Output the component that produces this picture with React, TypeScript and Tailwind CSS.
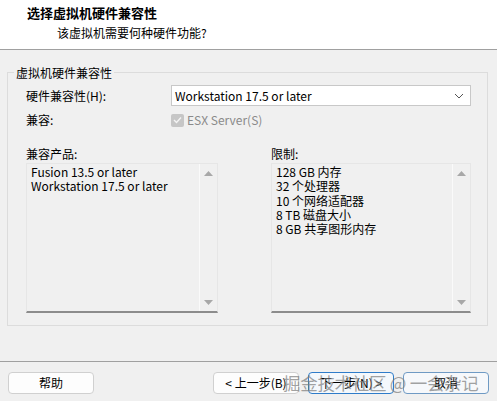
import React from "react";

const FONT = { fontFamily: '"Noto Sans CJK SC", "Noto Sans", sans-serif' };

function UpArrow() {
  return (
    <svg width="9" height="5" viewBox="0 0 9 5">
      <polygon points="0,5 4.5,0 9,5" fill="#a8a8a8" />
    </svg>
  );
}

function DownArrow() {
  return (
    <svg width="9" height="5" viewBox="0 0 9 5">
      <polygon points="0,0 9,0 4.5,5" fill="#a8a8a8" />
    </svg>
  );
}

function ListBox({ width, items }: { width: string; items: string[] }) {
  return (
    <div
      className={`${width} h-[150px] flex bg-[#f0f0f0] border-t border-l border-r border-t-[#e6e6e6] border-l-[#e6e6e6] border-r-[#e6e6e6] border-b-2 border-b-[#8c8c8c]`}
    >
      <div className="flex-1 pl-[4px] pt-[1px] text-[12px] leading-[14.3px] text-black">
        {items.map((t) => (
          <div key={t} className="whitespace-nowrap">
            {t}
          </div>
        ))}
      </div>
      <div className="w-[18px] border-l border-[#fafafa] flex flex-col items-center justify-between pt-[7px] pb-[6px]">
        <UpArrow />
        <DownArrow />
      </div>
    </div>
  );
}

function Button({
  label,
  variant = "normal",
}: {
  label: string;
  variant?: "normal" | "default" | "soft";
}) {
  const cls =
    variant === "default"
      ? "border-[#2f7cc9] bg-[#f4f8fc]"
      : variant === "soft"
      ? "border-[#6f9ac4] bg-[#f6f8fb]"
      : "border-[#d0d0d0] bg-[#fdfdfd]";
  return (
    <div
      className={`w-[86px] h-[22px] rounded-[4px] border flex items-center justify-center text-[12px] text-black whitespace-nowrap ${cls}`}
    >
      {label}
    </div>
  );
}

export default function App() {
  return (
    <div
      className="relative w-[497px] h-[401px] flex flex-col bg-[#f0f0f0] overflow-hidden"
      style={FONT}
    >
      {/* header band */}
      <div className="h-[50px] shrink-0 bg-white border-b border-[#a0a0a0] pl-[27px] pt-[4px]">
        <div className="text-[13px] font-bold leading-[18px] text-black">
          选择虚拟机硬件兼容性
        </div>
        <div className="pl-[30px] pt-[2px] text-[12px] leading-[18px] text-black">
          该虚拟机需要何种硬件功能?
        </div>
      </div>

      {/* group box */}
      <div className="pt-[22px] px-[7px]">
        <div className="relative h-[254px] w-[481px] border border-[#dcdcdc] pl-[18px] pr-[16px] pt-[12px]">
          <div className="absolute left-[6px] top-[-9px] bg-[#f0f0f0] px-[2px] text-[12px] leading-[17px] text-black">
            虚拟机硬件兼容性
          </div>

          <div className="flex items-center h-[21px]">
            <div className="w-[145px] text-[12px] text-black">硬件兼容性(H):</div>
            <div className="flex-1 h-[21px] bg-white border border-[#c8c8c8] flex items-center justify-between pl-[3px] pr-[6px] text-[12px] text-black">
              <span>Workstation 17.5 or later</span>
              <svg width="10" height="6" viewBox="0 0 10 6">
                <polyline
                  points="1,1 5,5 9,1"
                  fill="none"
                  stroke="#555"
                  strokeWidth="1"
                />
              </svg>
            </div>
          </div>

          <div className="flex items-center h-[18px] mt-[5px]">
            <div className="w-[145px] text-[12px] text-black">兼容:</div>
            <div className="flex items-center gap-[3px] text-[12px] text-[#8a8a8a]">
              <div className="w-[13px] h-[13px] rounded-[2px] bg-[#c6c6c6] flex items-center justify-center">
                <svg width="9" height="8" viewBox="0 0 9 8">
                  <polyline
                    points="1,4 3.5,6.5 8,1.5"
                    fill="none"
                    stroke="#f4f4f4"
                    strokeWidth="1.4"
                  />
                </svg>
              </div>
              <span>ESX Server(S)</span>
            </div>
          </div>

          <div className="flex justify-between mt-[16px] h-[17px] text-[12px] leading-[17px] text-black">
            <div className="w-[192px]">兼容产品:</div>
            <div className="w-[200px] -ml-[1px]">限制:</div>
          </div>

          <div className="flex justify-between mt-[1px]">
            <ListBox
              width="w-[192px]"
              items={["Fusion 13.5 or later", "Workstation 17.5 or later"]}
            />
            <ListBox
              width="w-[200px]"
              items={[
                "128 GB 内存",
                "32 个处理器",
                "10 个网络适配器",
                "8 TB 磁盘大小",
                "8 GB 共享图形内存",
              ]}
            />
          </div>
        </div>
      </div>

      {/* footer */}
      <div className="mt-[35px] border-t border-[#a0a0a0] flex items-start px-[8px] pt-[10px]">
        <Button label="帮助" />
        <div className="flex-1" />
        <div className="flex gap-[9px]">
          <Button label="< 上一步(B)" />
          <Button label="下一步(N) >" variant="default" />
          <Button label="取消" variant="soft" />
        </div>
      </div>

      {/* watermark */}
      <div className="absolute left-[283px] top-[371px] text-[17.5px] leading-[24px] tracking-[-0.3px] text-[#7a7a7a]/70 whitespace-nowrap pointer-events-none">
        掘金技术社区 @ 一会杂记
      </div>
    </div>
  );
}
